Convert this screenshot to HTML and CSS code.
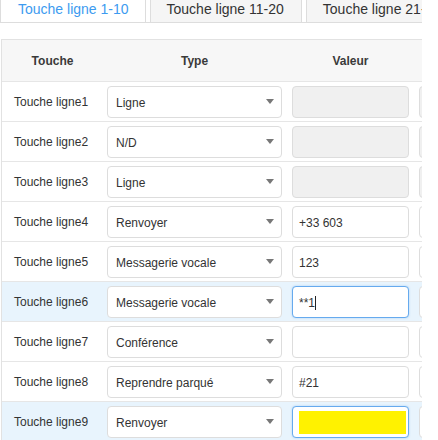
FILE: index.html
```html
<!DOCTYPE html>
<html lang="fr">
<head>
<meta charset="utf-8">
<title>Touches ligne</title>
<link rel="stylesheet" href="styles.css">
</head>
<body>
<div class="page">
  <div class="tabs">
    <div class="tab active">Touche ligne 1-10</div>
    <div class="tab">Touche ligne 11-20</div>
    <div class="tab">Touche ligne 21-30</div>
  </div>

  <div class="table">
    <div class="row head">
      <div class="th th-first">Touche</div>
      <div class="th">Type</div>
      <div class="th">Valeur</div>
      <div class="th"></div>
    </div>

    <div class="row">
      <div class="label">Touche ligne1</div>
      <div class="select"><span>Ligne</span><svg class="caret" width="8" height="5" viewBox="0 0 8 5"><path d="M0 0H8L4 5Z"/></svg></div>
      <div class="input disabled"></div>
      <div class="input disabled"></div>
    </div>
    <div class="row">
      <div class="label">Touche ligne2</div>
      <div class="select"><span>N/D</span><svg class="caret" width="8" height="5" viewBox="0 0 8 5"><path d="M0 0H8L4 5Z"/></svg></div>
      <div class="input disabled"></div>
      <div class="input disabled"></div>
    </div>
    <div class="row">
      <div class="label">Touche ligne3</div>
      <div class="select"><span>Ligne</span><svg class="caret" width="8" height="5" viewBox="0 0 8 5"><path d="M0 0H8L4 5Z"/></svg></div>
      <div class="input disabled"></div>
      <div class="input disabled"></div>
    </div>
    <div class="row">
      <div class="label">Touche ligne4</div>
      <div class="select"><span>Renvoyer</span><svg class="caret" width="8" height="5" viewBox="0 0 8 5"><path d="M0 0H8L4 5Z"/></svg></div>
      <div class="input">+33 603</div>
      <div class="input"></div>
    </div>
    <div class="row">
      <div class="label">Touche ligne5</div>
      <div class="select"><span>Messagerie vocale</span><svg class="caret" width="8" height="5" viewBox="0 0 8 5"><path d="M0 0H8L4 5Z"/></svg></div>
      <div class="input">123</div>
      <div class="input"></div>
    </div>
    <div class="row hl">
      <div class="label">Touche ligne6</div>
      <div class="select"><span>Messagerie vocale</span><svg class="caret" width="8" height="5" viewBox="0 0 8 5"><path d="M0 0H8L4 5Z"/></svg></div>
      <div class="input focus">**1<span class="cursor"></span></div>
      <div class="input"></div>
    </div>
    <div class="row">
      <div class="label">Touche ligne7</div>
      <div class="select"><span>Conférence</span><svg class="caret" width="8" height="5" viewBox="0 0 8 5"><path d="M0 0H8L4 5Z"/></svg></div>
      <div class="input"></div>
      <div class="input"></div>
    </div>
    <div class="row">
      <div class="label">Touche ligne8</div>
      <div class="select"><span>Reprendre parqué</span><svg class="caret" width="8" height="5" viewBox="0 0 8 5"><path d="M0 0H8L4 5Z"/></svg></div>
      <div class="input">#21</div>
      <div class="input"></div>
    </div>
    <div class="row hl">
      <div class="label">Touche ligne9</div>
      <div class="select"><span>Renvoyer</span><svg class="caret" width="8" height="5" viewBox="0 0 8 5"><path d="M0 0H8L4 5Z"/></svg></div>
      <div class="input focus"><span class="marked"></span></div>
      <div class="input"></div>
    </div>
  </div>
</div>
</body>
</html>
```

FILE: styles.css
```css
html, body {
  margin: 0;
  padding: 0;
  background: #ffffff;
}

body {
  font-family: "Liberation Sans", Arial, sans-serif;
  color: #333333;
}

.page {
  width: 422px;
  height: 440px;
  overflow: hidden;
}

/* Tabs */
.tabs {
  display: flex;
  gap: 4px;
  height: 22px;
  border-bottom: 1px solid #dddddd;
  white-space: nowrap;
  overflow: hidden;
}

.tab {
  box-sizing: border-box;
  flex: none;
  height: 23px;
  margin-bottom: -1px;
  padding: 1px 17px 0 16px;
  font-size: 14px;
  line-height: 16px;
  color: #333333;
  background: #f5f5f5;
  border-left: 1px solid #dddddd;
  border-right: 1px solid #dddddd;
  border-bottom: 1px solid #dddddd;
}

.tab.active {
  padding: 1px 16px 0 17px;
  background: #ffffff;
  color: #3d9bf0;
  border-bottom-color: #ffffff;
}

/* Table */
.table {
  margin: 16px 0 0 1px;
  border-left: 1px solid #e2e2e2;
  border-top: 1px solid #e2e2e2;
  width: 480px;
}

.row {
  display: grid;
  grid-template-columns: 95px 175px 117px 117px;
  column-gap: 10px;
  align-items: center;
  height: 40px;
  box-sizing: border-box;
  padding: 4px 0 3px 0;
  border-bottom: 1px solid #e6e6e6;
}

.row.head {
  height: 42px;
  padding: 0;
  background: #f7f7f7;
}

.th {
  font-size: 12px;
  font-weight: bold;
  text-align: center;
  color: #3a3a3a;
}

.th-first {
  padding-left: 6px;
}

.row.hl {
  background: #e8f4fd;
}

.label {
  padding-left: 12px;
  font-size: 12px;
  color: #333333;
  white-space: nowrap;
}

.select,
.input {
  box-sizing: border-box;
  height: 32px;
  border: 1px solid #dddddd;
  border-radius: 4px;
  background: #ffffff;
  font-size: 12px;
  color: #333333;
  display: flex;
  align-items: center;
  white-space: nowrap;
  overflow: hidden;
}

.select {
  position: relative;
  padding: 1px 0 0 8px;
}

.caret {
  position: absolute;
  right: 7px;
  top: 12px;
  fill: #777777;
}

.input {
  padding: 1px 0 0 6px;
}

.input.disabled {
  background: #f0f0f0;
}

.input.focus {
  border-color: #66aaee;
  box-shadow: 0 0 2px rgba(102, 170, 238, 0.5);
}

.cursor {
  display: inline-block;
  width: 1px;
  height: 14px;
  background: #222222;
}

.marked {
  display: block;
  width: 107px;
  height: 23px;
  margin-top: -1px;
  background: #fff200;
}
```
